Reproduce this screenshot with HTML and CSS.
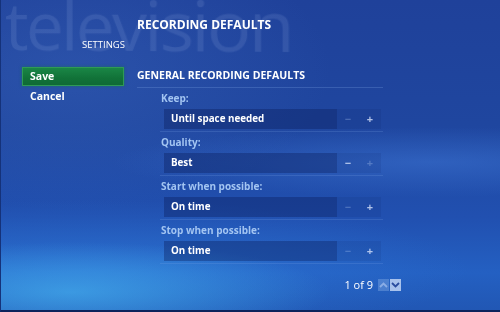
FILE: index.html
```html
<!DOCTYPE html>
<html lang="en">
<head>
    <meta charset="UTF-8">
    <meta name="viewport" content="width=device-width, initial-scale=1.0">
    <title>Recording Defaults - Settings</title>
    <link rel="stylesheet" href="styles.css">
</head>
<body>
    <div class="screen">
        <div class="watermark" aria-hidden="true">television</div>

        <header class="header">
            <h1>RECORDING DEFAULTS</h1>
        </header>
        <div class="crumb">SETTINGS</div>

        <div class="content">
            <nav class="side">
                <button class="side-btn active">Save</button>
                <button class="side-btn">Cancel</button>
            </nav>

            <main class="panel">
                <h2>GENERAL RECORDING DEFAULTS</h2>

                <div class="group">
                    <div class="label">Keep:</div>
                    <div class="row">
                        <div class="value">Until space needed</div>
                        <span class="step dim">&minus;</span>
                        <span class="step">+</span>
                    </div>
                </div>

                <div class="group">
                    <div class="label">Quality:</div>
                    <div class="row">
                        <div class="value">Best</div>
                        <span class="step">&minus;</span>
                        <span class="step dim">+</span>
                    </div>
                </div>

                <div class="group">
                    <div class="label">Start when possible:</div>
                    <div class="row">
                        <div class="value">On time</div>
                        <span class="step dim">&minus;</span>
                        <span class="step">+</span>
                    </div>
                </div>

                <div class="group">
                    <div class="label">Stop when possible:</div>
                    <div class="row">
                        <div class="value">On time</div>
                        <span class="step dim">&minus;</span>
                        <span class="step">+</span>
                    </div>
                </div>
            </main>
        </div>

        <div class="pager">
            <span class="page-count">1 of 9</span>
            <span class="arrow up">
                <svg width="9" height="6" viewBox="0 0 9 6"><path d="M1 5 L4.5 1.5 L8 5" fill="none" stroke="currentColor" stroke-width="1.8"/></svg>
            </span>
            <span class="arrow down">
                <svg width="9" height="6" viewBox="0 0 9 6"><path d="M1 1 L4.5 4.5 L8 1" fill="none" stroke="currentColor" stroke-width="1.8"/></svg>
            </span>
        </div>
    </div>
</body>
</html>
```

FILE: styles.css
```css
body {
    margin: 0;
    font-family: 'Open Sans', 'Noto Sans', 'DejaVu Sans', sans-serif;
    background: #0e2560;
}

.screen {
    position: relative;
    width: 500px;
    height: 312px;
    box-sizing: border-box;
    overflow: hidden;
    border-left: 1px solid #15327a;
    border-bottom: 2px solid #0d235c;
    color: #ffffff;
    background:
        radial-gradient(ellipse 260px 50px at 70px 292px, rgba(70, 180, 240, 0.65), transparent),
        radial-gradient(ellipse 380px 70px at 90px 270px, rgba(50, 130, 225, 0.45), transparent),
        radial-gradient(ellipse 320px 35px at 430px 162px, rgba(70, 130, 225, 0.4), transparent),
        radial-gradient(ellipse 260px 140px at 70px 70px, rgba(70, 115, 200, 0.3), transparent),
        linear-gradient(180deg, #1f419a 0%, #1f469f 40%, #2150b0 70%, #2460c2 88%, #2157b4 100%);
}

/* big faded section name behind the header */
.watermark {
    position: absolute;
    left: 4px;
    top: -9px;
    font-size: 66px;
    line-height: 1;
    font-weight: 400;
    letter-spacing: -2.5px;
    color: rgba(200, 220, 255, 0.11);
    transform: perspective(320px) rotateY(-5deg);
    transform-origin: left center;
    pointer-events: none;
}

.header {
    position: relative;
    padding: 16px 0 0 136px;
}

h1 {
    margin: 0;
    font-size: 12px;
    line-height: 18px;
    font-weight: 700;
}

.crumb {
    position: relative;
    width: 124px;
    margin-top: 4px;
    font-size: 9.5px;
    line-height: 14px;
    text-align: right;
}

.content {
    position: relative;
    display: flex;
    margin-top: 15px;
}

.side {
    display: flex;
    flex-direction: column;
    gap: 1px;
    width: 102px;
    margin-left: 21px;
}

.side-btn {
    height: 19px;
    padding: 0 0 0 7px;
    border: 1px solid transparent;
    background: none;
    color: #ffffff;
    font-family: inherit;
    font-size: 10.5px;
    font-weight: 700;
    line-height: 17px;
    text-align: left;
}

.side-btn.active {
    background: linear-gradient(180deg, #1a8646 0%, #117238 60%, #0f6a36 100%);
    border-color: #2f9a55;
    box-shadow: 0 0 3px rgba(20, 120, 60, 0.6);
}

.panel {
    width: 246px;
    margin-left: 13px;
}

h2 {
    margin: 0;
    padding-bottom: 3px;
    font-size: 10.5px;
    line-height: 17px;
    font-weight: 700;
    border-bottom: 1px solid rgba(130, 170, 235, 0.25);
}

.group {
    margin-left: 23px;
    padding: 3px 0 2px;
    border-bottom: 1px solid rgba(130, 170, 235, 0.2);
}

.label {
    padding-left: 1px;
    font-size: 10px;
    line-height: 15px;
    font-weight: 700;
    color: #a3c5f2;
}

.row {
    display: flex;
    height: 20px;
    margin: 3px 0 0 4px;
}

.value {
    width: 173px;
    padding-left: 7px;
    box-sizing: border-box;
    font-size: 9.8px;
    line-height: 20px;
    font-weight: 700;
    background: rgba(10, 25, 85, 0.35);
}

.step {
    width: 22px;
    text-align: center;
    font-size: 11px;
    line-height: 20px;
    font-weight: 700;
    color: rgba(225, 235, 255, 0.75);
    background: rgba(10, 25, 85, 0.1);
}

.step.dim {
    color: rgba(190, 210, 245, 0.3);
}

.pager {
    position: relative;
    display: flex;
    align-items: center;
    justify-content: flex-end;
    gap: 1px;
    margin-top: 14px;
    padding-right: 99px;
    height: 14px;
}

.page-count {
    margin-right: 4px;
    font-size: 11px;
    line-height: 14px;
}

.arrow {
    display: flex;
    align-items: center;
    justify-content: center;
    width: 11px;
    height: 12px;
}

.arrow.up {
    background: rgba(150, 185, 235, 0.35);
    color: rgba(190, 210, 245, 0.55);
}

.arrow.down {
    background: #a8c2ec;
    color: #2a4c9e;
}
```
